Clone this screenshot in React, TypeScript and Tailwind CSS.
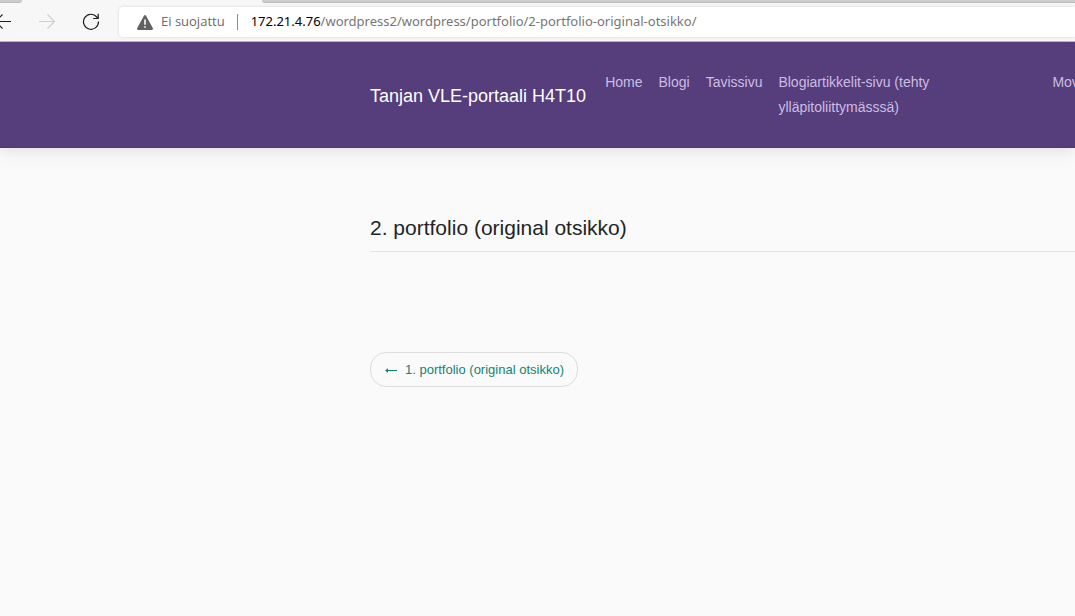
const navLinks = ["Home", "Blogi", "Tavissivu"];

function BrowserBar() {
  return (
    <div className="bg-[#f7f7f7] border-b border-[#b9b9b9]">
      <div className="flex h-[3px] justify-between">
        <div className="w-[22px] rounded-br-sm border-b border-[#bcbcbc] bg-[#cdcdcd]" />
        <div className="ml-[240px] flex-1 rounded-bl-sm border-b border-[#bcbcbc] bg-[#cdcdcd]" />
      </div>
      <div className="flex h-[38px] items-center">
        <button type="button" aria-label="Takaisin" className="w-[12px] shrink-0 overflow-hidden">
          <svg width="12" height="18" viewBox="0 0 12 18" fill="none" stroke="#1a1a1a" strokeWidth="1.1">
            <path d="M11 8.5H-4M2.5 1.5L-4.5 8.5L2.5 15.5" />
          </svg>
        </button>
        <button type="button" aria-label="Eteenpäin" disabled className="ml-[26px] shrink-0">
          <svg width="18" height="18" viewBox="0 0 18 18" fill="none" stroke="#cfcfcf" strokeWidth="1.1">
            <path d="M1 8.5H16.5M9.5 1.5L16.5 8.5L9.5 15.5" />
          </svg>
        </button>
        <button type="button" aria-label="Päivitä" className="ml-[26px] shrink-0">
          <svg width="18" height="18" viewBox="0 0 18 18" fill="none" stroke="#1a1a1a" strokeWidth="1.2">
            <path d="M16.5 8.5A7.5 7.5 0 1 1 14.8 4L15.8 5.3M16.2 .8V5.5H11.2" />
          </svg>
        </button>
        <div className="ml-[19px] flex h-[30px] min-w-0 flex-1 items-center rounded-l-sm bg-white pl-[18px] shadow-[0_0_3px_rgba(0,0,0,0.14)]">
          <svg width="16" height="15" viewBox="0 0 16 15" className="shrink-0">
            <path d="M7.1 .5Q8 -.4 8.9 .5L15.9 13.3Q16.2 14.8 15 15H1Q-.2 14.8 .1 13.3Z" fill="#616161" />
            <path d="M7.2 4.5H8.8V9.7H7.2ZM7.2 11.2H8.8V12.8H7.2Z" fill="#fff" />
          </svg>
          <span className="ml-2 shrink-0 text-[#6b6b6b]">Ei suojattu</span>
          <span className="ml-3 h-4 w-px shrink-0 bg-[#8c8c8c]" />
          <span className="ml-[13px] whitespace-nowrap text-[#767676] font-['Noto_Sans','Open_Sans',sans-serif]">
            <span className="text-black">172.21.4.76</span>/wordpress2/wordpress/portfolio/2-portfolio-original-otsikko/
          </span>
        </div>
      </div>
    </div>
  );
}

export default function App() {
  return (
    <div className="min-h-screen overflow-x-hidden bg-[#fafafa] font-['Liberation_Sans',Arial,sans-serif]">
      <div className="font-['Open_Sans','Noto_Sans',sans-serif] text-[13px]">
        <BrowserBar />
      </div>

      <header className="flex h-[106px] items-start overflow-hidden border-b border-[#4f3874] bg-[#563d7c] pt-7 pl-[370px] shadow-[0_8px_16px_rgba(0,0,0,0.05),0_4px_8px_rgba(0,0,0,0.03)]">
        <a href="#" className="mt-3 shrink-0 text-[18px] leading-7 whitespace-nowrap text-white">
          Tanjan VLE-portaali H4T10
        </a>
        <nav className="ml-[19px] flex shrink-0 gap-4 text-[14px] leading-[25px] text-[#cbbde2]">
          {navLinks.map((label) => (
            <a key={label} href="#">
              {label}
            </a>
          ))}
          <a href="#" className="w-[258px]">
            Blogiartikkelit-sivu (tehty
            <br />
            ylläpitoliittymässsä)
          </a>
          <a href="#">Mov</a>
        </nav>
      </header>

      <main className="pt-16 pl-[370px]">
        <h1 className="border-b border-[#e5e5e5] pb-2 text-[21px] leading-[31px] text-[#212529]">
          2. portfolio (original otsikko)
        </h1>
        <a
          href="#"
          className="mt-[100px] inline-flex h-[35px] items-center gap-[7px] rounded-2xl border border-[#dddddd] px-[13px] text-[13px] text-[#0f8577]"
        >
          <svg width="14" height="9" viewBox="0 0 14 9" fill="none" stroke="currentColor" strokeWidth="1.1">
            <path d="M2 5.5H13" />
            <path d="M4 3.2L1 5.5L4 7.8Z" fill="currentColor" stroke="none" />
          </svg>
          1. portfolio (original otsikko)
        </a>
      </main>
    </div>
  );
}
